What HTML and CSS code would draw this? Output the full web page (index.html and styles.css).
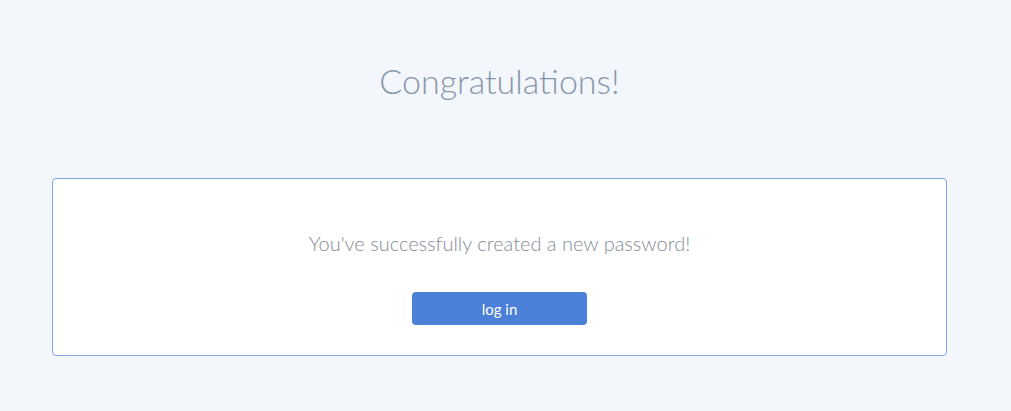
FILE: index.html
```html
<!DOCTYPE html>
<html>
<head>
<meta charset="utf-8">
<link rel="stylesheet" href="styles.css">
</head>
<body>
<div class="page">
  <h1 class="title">Congratulations!</h1>
  <div class="card">
    <p class="message">You've successfully created a new password!</p>
    <button class="btn" type="button">log in</button>
  </div>
</div>
</body>
</html>
```
FILE: styles.css
```css
html, body {
  margin: 0;
  padding: 0;
  background: #f3f6fa;
}
body {
  font-family: Lato, "Open Sans", sans-serif;
  width: 1011px;
  height: 411px;
  overflow: hidden;
}
.page {
  width: 895px;
  margin-left: 52px;
  display: flex;
  flex-direction: column;
  align-items: stretch;
}
.title {
  margin: 57px 0 0;
  height: 121px;
  text-align: center;
  font-weight: 300;
  font-size: 34px;
  line-height: 48px;
  color: #8797ac;
}
.card {
  background: #fff;
  border: 1px solid #7ea8e8;
  border-radius: 4px;
  box-sizing: border-box;
  height: 178px;
  display: flex;
  flex-direction: column;
  align-items: center;
}
.message {
  margin: 52px 0 0;
  font-size: 20px;
  font-weight: 300;
  line-height: 24px;
  color: #858b96;
}
.btn {
  margin-top: 37px;
  width: 175px;
  height: 33px;
  border: none;
  border-radius: 4px;
  background: #4a80d8;
  color: #fff;
  font-family: Lato, sans-serif;
  font-size: 15px;
  font-weight: 400;
  padding: 0;
}
```
